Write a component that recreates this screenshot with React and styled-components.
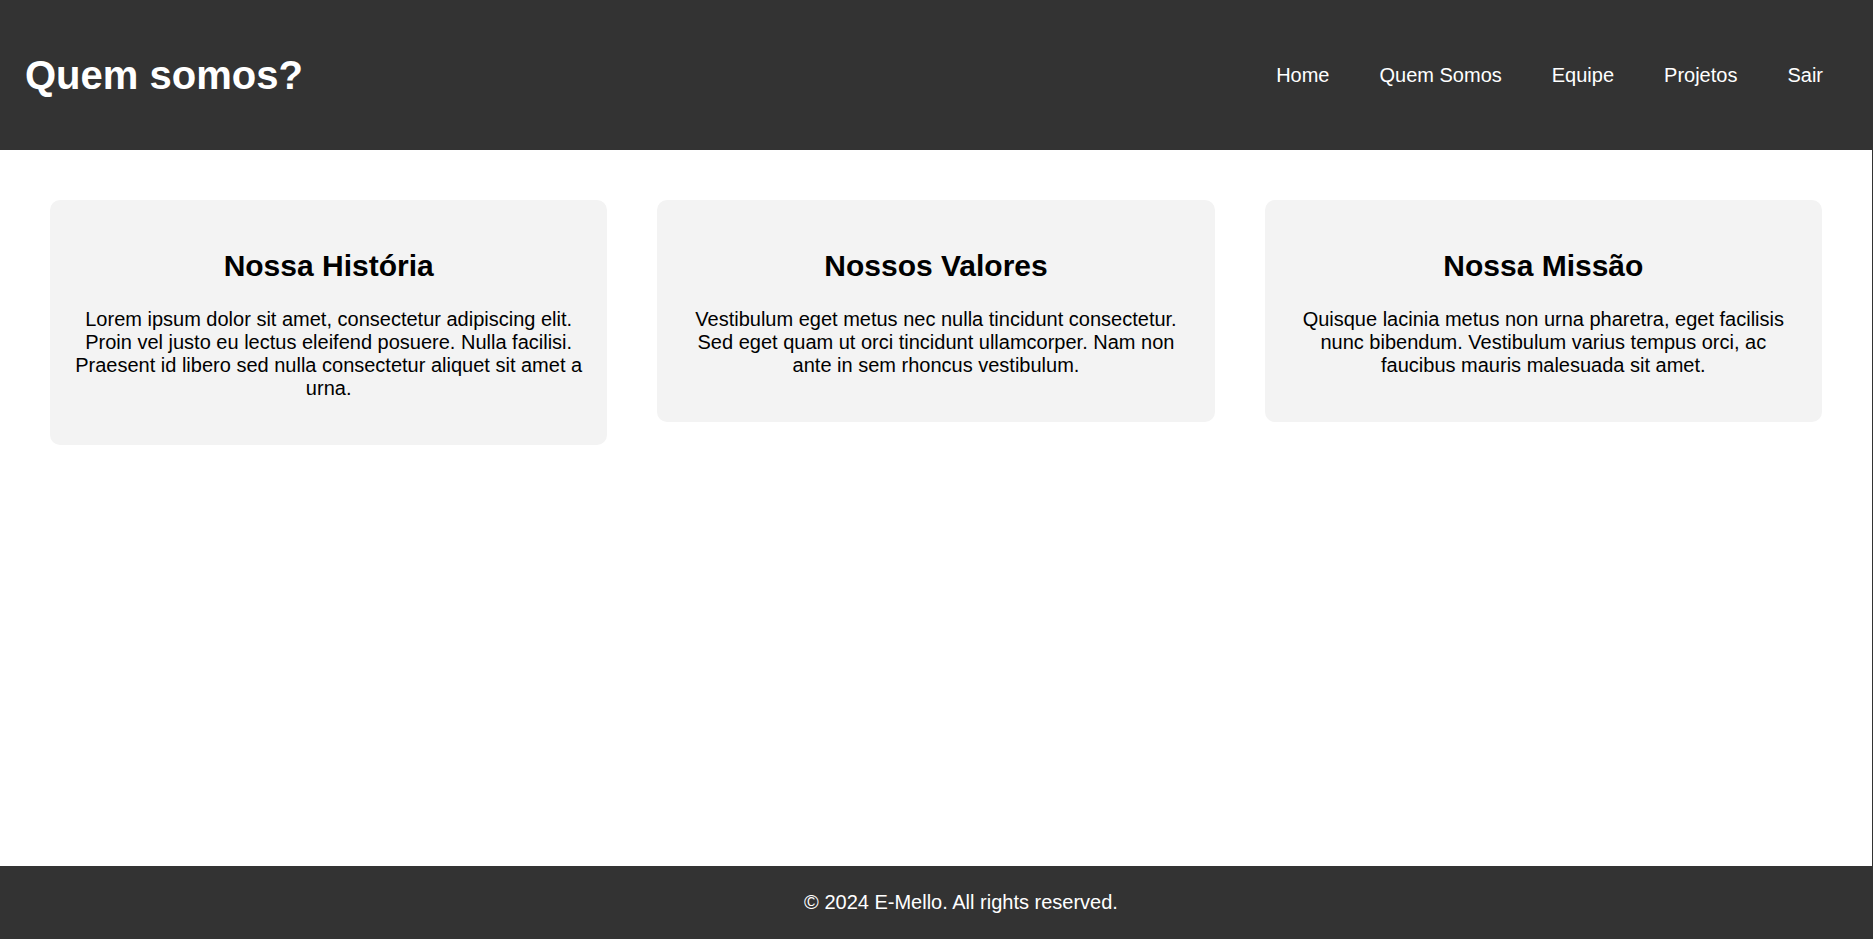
import React from "react";
import styled, { createGlobalStyle } from "styled-components";

const GlobalStyle = createGlobalStyle`
  html, body {
    margin: 0;
    padding: 0;
  }
  body {
    font-family: "Liberation Sans", Arial, sans-serif;
    background: #ffffff;
    color: #000000;
  }
`;

export const Page = styled.div`
  display: flex;
  flex-direction: column;
  min-height: 100vh;
`;

export const Header = styled.header`
  height: 150px;
  padding: 0 25px;
  background: #333333;
  color: #ffffff;
  display: flex;
  align-items: center;
  justify-content: space-between;
`;

export const Title = styled.h1`
  margin: 0;
  font-size: 40px;
  font-weight: bold;
`;

export const Nav = styled.nav`
  display: flex;
  align-items: center;
`;

export const NavLink = styled.a`
  margin: 0 25px;
  font-size: 20px;
  color: #ffffff;
  text-decoration: none;
  cursor: pointer;
`;

export const Main = styled.main`
  flex: 1;
  padding: 50px;
  border-right: 1px solid #333333;
  display: flex;
  align-items: flex-start;
  gap: 50px;
`;

export const Card = styled.section`
  flex: 1;
  padding: 20px;
  background: #f3f3f3;
  border-radius: 10px;
  text-align: center;
`;

export const CardTitle = styled.h2`
  margin: 29px 0 25px;
  font-size: 30px;
  font-weight: bold;
`;

export const CardText = styled.p`
  margin: 0 0 25px;
  font-size: 20px;
  line-height: 23px;
`;

export const Footer = styled.footer`
  padding: 25px 0 25px 49px;
  background: #333333;
  color: #ffffff;
  text-align: center;
  font-size: 20px;
  line-height: 23px;
`;

const links = ["Home", "Quem Somos", "Equipe", "Projetos", "Sair"];

const cards = [
  {
    title: "Nossa História",
    text: "Lorem ipsum dolor sit amet, consectetur adipiscing elit. Proin vel justo eu lectus eleifend posuere. Nulla facilisi. Praesent id libero sed nulla consectetur aliquet sit amet a urna.",
  },
  {
    title: "Nossos Valores",
    text: "Vestibulum eget metus nec nulla tincidunt consectetur. Sed eget quam ut orci tincidunt ullamcorper. Nam non ante in sem rhoncus vestibulum.",
  },
  {
    title: "Nossa Missão",
    text: "Quisque lacinia metus non urna pharetra, eget facilisis nunc bibendum. Vestibulum varius tempus orci, ac faucibus mauris malesuada sit amet.",
  },
];

export default function App() {
  return (
    <Page>
      <GlobalStyle />
      <Header>
        <Title>Quem somos?</Title>
        <Nav>
          {links.map((l) => (
            <NavLink key={l}>{l}</NavLink>
          ))}
        </Nav>
      </Header>
      <Main>
        {cards.map((c) => (
          <Card key={c.title}>
            <CardTitle>{c.title}</CardTitle>
            <CardText>{c.text}</CardText>
          </Card>
        ))}
      </Main>
      <Footer>© 2024 E-Mello. All rights reserved.</Footer>
    </Page>
  );
}
